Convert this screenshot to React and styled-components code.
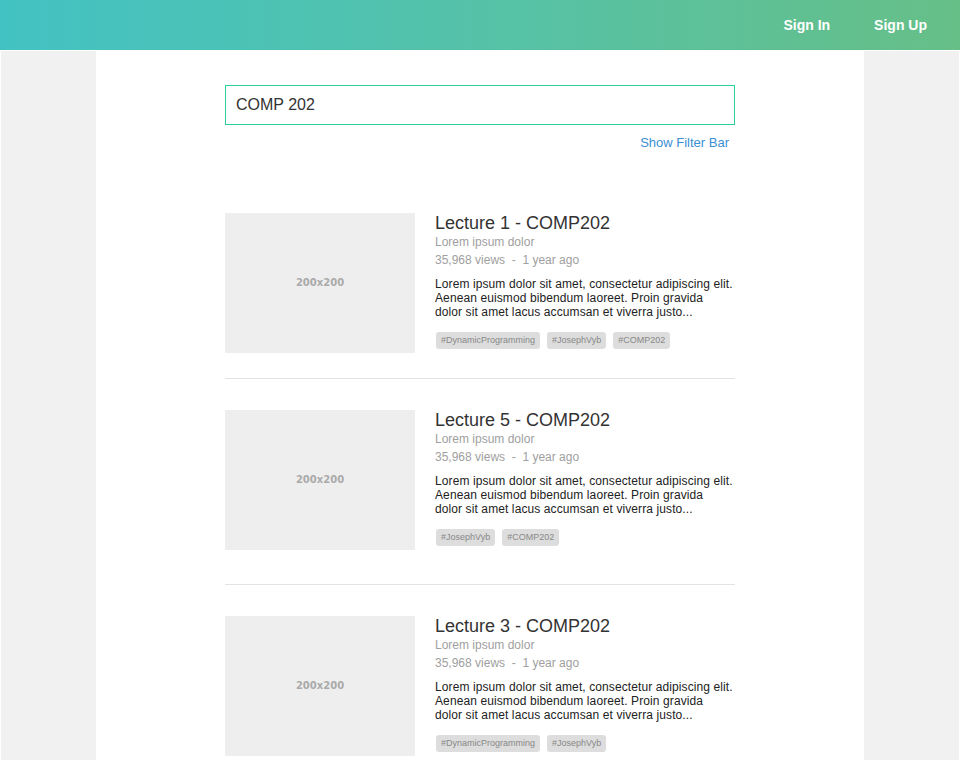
import React, { useState } from 'react';
import styled, { createGlobalStyle } from 'styled-components';

const GlobalStyle = createGlobalStyle`
  * { box-sizing: border-box; }
  body {
    margin: 0;
    background: #fff;
    font-family: 'Liberation Sans', Arial, sans-serif;
  }
`;

const Header = styled.header`
  height: 50px;
  background: linear-gradient(90deg, #43c2c3 0%, #53c2ab 45%, #66bf87 100%);
  display: flex;
  align-items: center;
  justify-content: flex-end;
  padding-right: 33px;
  gap: 44px;
`;

const NavLink = styled.a`
  color: #fff;
  font-weight: bold;
  font-size: 14px;
  cursor: pointer;
`;

const Page = styled.div`
  margin: 1px 1px 0 1px;
  background: #f1f1f1;
  display: flex;
  justify-content: center;
`;

const Content = styled.main`
  width: 768px;
  background: #fff;
  padding: 34px 0 0 129px;
`;

const Column = styled.div`
  width: 510px;
`;

const SearchInput = styled.input`
  width: 510px;
  height: 40px;
  border: 1px solid #2bcf9b;
  outline: none;
  padding: 0 10px;
  font-family: 'Liberation Sans', Arial, sans-serif;
  font-size: 16px;
  color: #333;
`;

const FilterRow = styled.div`
  display: flex;
  justify-content: flex-end;
  padding: 10px 6px 0 0;
  margin-bottom: 63px;
`;

const FilterLink = styled.a`
  color: #3b8fd3;
  font-size: 13px;
  cursor: pointer;
`;

const Result = styled.article`
  display: flex;
  gap: 20px;
  padding-bottom: ${(p) => p.$below}px;
  margin-bottom: 31px;
  border-bottom: ${(p) => (p.$last ? 'none' : '1px solid #e3e3e3')};
`;

const Thumb = styled.div`
  flex: 0 0 190px;
  height: 140px;
  background: #eeeeee;
  display: flex;
  align-items: center;
  justify-content: center;
  padding-bottom: 2px;
  font-family: 'DejaVu Sans', Verdana, sans-serif;
  font-weight: bold;
  font-size: 10px;
  color: #aaa;
`;

const Info = styled.div`
  flex: 1;
  display: flex;
  flex-direction: column;
`;

const Title = styled.h3`
  margin: 0;
  font-weight: normal;
  font-size: 18px;
  line-height: 20px;
  color: #333;
`;

const Meta = styled.div`
  font-size: 12px;
  line-height: 18px;
  color: #a0a0a0;
`;

const Desc = styled.p`
  margin: 8px 0 0;
  font-size: 12px;
  line-height: 14px;
  letter-spacing: 0.1px;
  color: #222;
`;

const Tags = styled.div`
  display: flex;
  gap: 7px;
  margin-top: 13px;
  padding-left: 1px;
`;

const Tag = styled.span`
  height: 17px;
  line-height: 17px;
  padding: 0 5px;
  background: #dddddd;
  border-radius: 3px;
  font-size: 9px;
  color: #888;
`;

const results = [
  { title: 'Lecture 1 - COMP202', tags: ['#DynamicProgramming', '#JosephVyb', '#COMP202'], below: 25 },
  { title: 'Lecture 5 - COMP202', tags: ['#JosephVyb', '#COMP202'], below: 34 },
  { title: 'Lecture 3 - COMP202', tags: ['#DynamicProgramming', '#JosephVyb'], below: 0 },
];

const App = () => {
  const [query, setQuery] = useState('COMP 202');
  return (
    <>
      <GlobalStyle />
      <Header>
        <NavLink>Sign In</NavLink>
        <NavLink>Sign Up</NavLink>
      </Header>
      <Page>
        <Content>
          <Column>
            <SearchInput value={query} onChange={(e) => setQuery(e.target.value)} />
            <FilterRow>
              <FilterLink>Show Filter Bar</FilterLink>
            </FilterRow>
            {results.map((r, i) => (
              <Result key={r.title} $below={r.below} $last={i === results.length - 1}>
                <Thumb>200x200</Thumb>
                <Info>
                  <Title>{r.title}</Title>
                  <Meta>Lorem ipsum dolor</Meta>
                  <Meta>35,968 views &nbsp;-&nbsp; 1 year ago</Meta>
                  <Desc>
                    Lorem ipsum dolor sit amet, consectetur adipiscing elit. Aenean euismod bibendum
                    laoreet. Proin gravida
                    <br />
                    dolor sit amet lacus accumsan et viverra justo...
                  </Desc>
                  <Tags>
                    {r.tags.map((t) => (
                      <Tag key={t}>{t}</Tag>
                    ))}
                  </Tags>
                </Info>
              </Result>
            ))}
          </Column>
        </Content>
      </Page>
    </>
  );
};

export default App;
